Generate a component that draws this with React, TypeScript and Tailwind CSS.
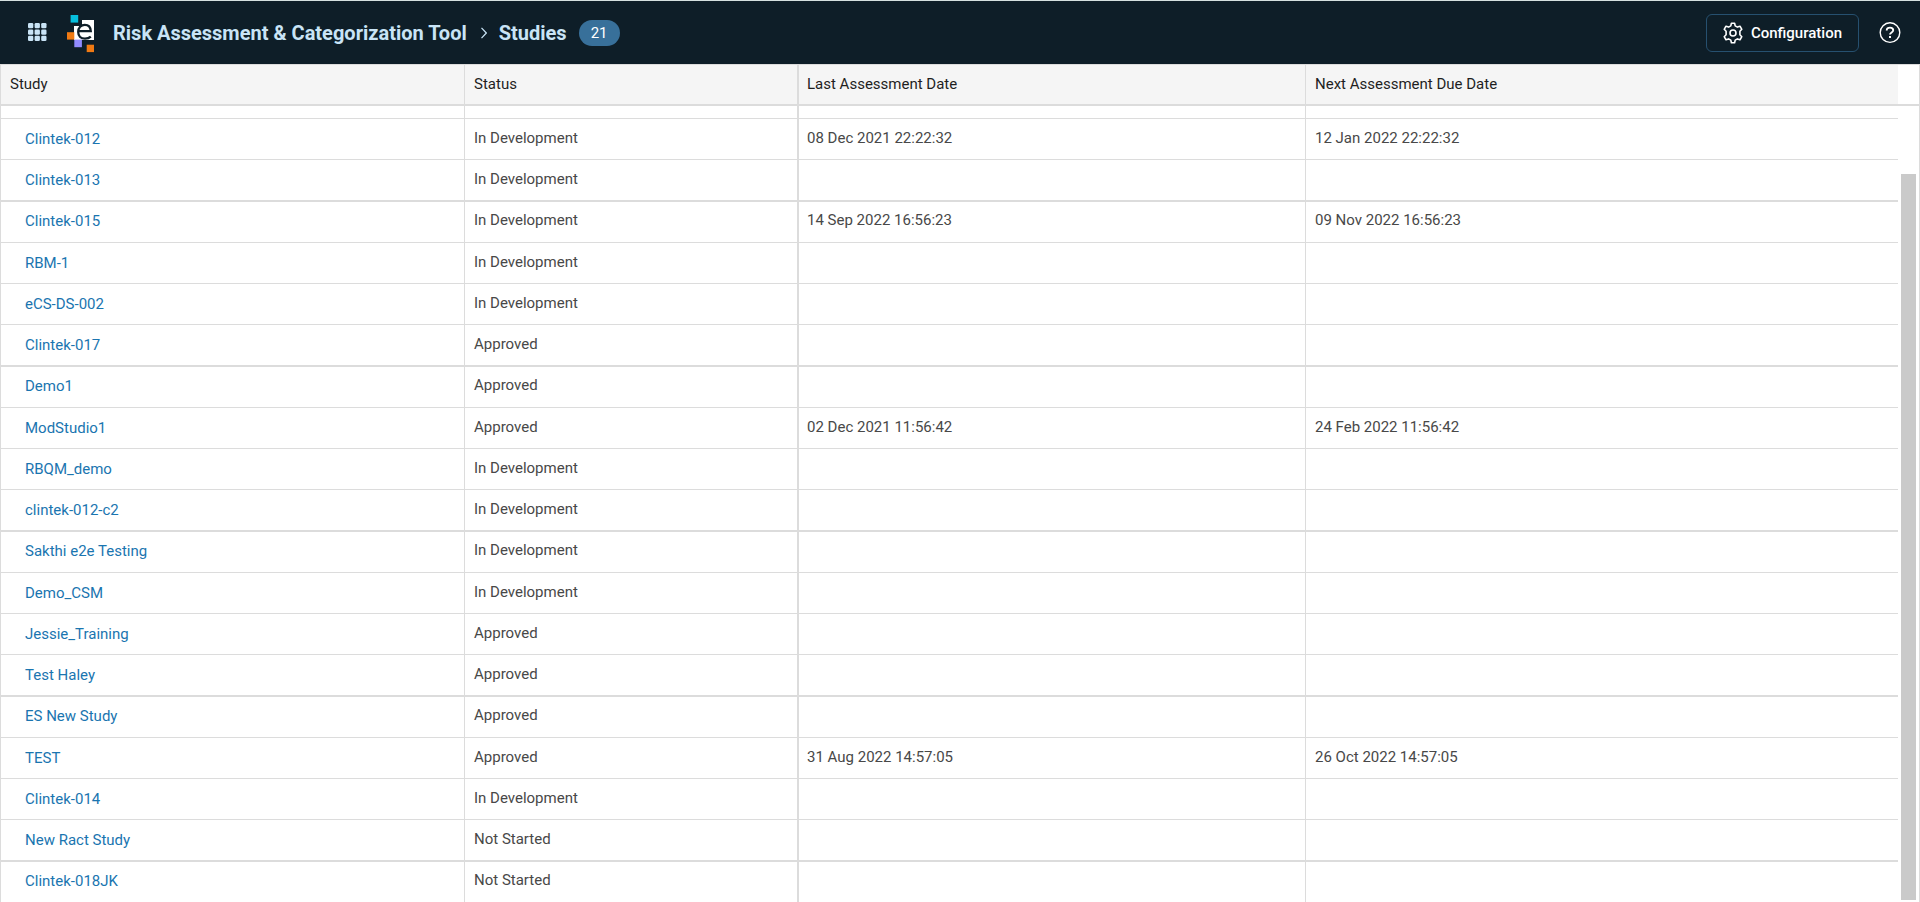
import { Fragment } from 'react';

type Study = { name: string; status: string; last?: string; next?: string };

const studies: Study[] = [
  { name: 'Clintek-012', status: 'In Development', last: '08 Dec 2021 22:22:32', next: '12 Jan 2022 22:22:32' },
  { name: 'Clintek-013', status: 'In Development' },
  { name: 'Clintek-015', status: 'In Development', last: '14 Sep 2022 16:56:23', next: '09 Nov 2022 16:56:23' },
  { name: 'RBM-1', status: 'In Development' },
  { name: 'eCS-DS-002', status: 'In Development' },
  { name: 'Clintek-017', status: 'Approved' },
  { name: 'Demo1', status: 'Approved' },
  { name: 'ModStudio1', status: 'Approved', last: '02 Dec 2021 11:56:42', next: '24 Feb 2022 11:56:42' },
  { name: 'RBQM_demo', status: 'In Development' },
  { name: 'clintek-012-c2', status: 'In Development' },
  { name: 'Sakthi e2e Testing', status: 'In Development' },
  { name: 'Demo_CSM', status: 'In Development' },
  { name: 'Jessie_Training', status: 'Approved' },
  { name: 'Test Haley', status: 'Approved' },
  { name: 'ES New Study', status: 'Approved' },
  { name: 'TEST', status: 'Approved', last: '31 Aug 2022 14:57:05', next: '26 Oct 2022 14:57:05' },
  { name: 'Clintek-014', status: 'In Development' },
  { name: 'New Ract Study', status: 'Not Started' },
  { name: 'Clintek-018JK', status: 'Not Started' },
];

function AppsIcon() {
  return (
    <svg width="19" height="19" viewBox="0 0 19 19" fill="#c9e4f6" aria-hidden="true">
      {[0, 6.4, 12.8].map((y) => (
        <Fragment key={y}>
          {[0, 6.6, 13.2].map((x) => (
            <rect key={x} x={x} y={y} width="5.3" height="5.3" rx="1.3" />
          ))}
        </Fragment>
      ))}
    </svg>
  );
}

function Logo() {
  return (
    <svg width="28" height="41" viewBox="0 -3 28 41" aria-hidden="true">
      <rect x="3.6" y="0" width="7.6" height="7.6" fill="#06bfdd" />
      <path d="M15 5h12v20H7V11h8z" fill="#fff" />
      <rect x="0" y="17.2" width="7.3" height="7.4" fill="#f07a13" />
      <rect x="7.3" y="24.6" width="7.6" height="7.6" fill="#918bff" />
      <rect x="19.7" y="29.7" width="7.3" height="7.4" fill="#f07a13" />
      <path d="M11.4 16.2H23.8C23.6 12 21.3 9.8 17.8 9.8C14 9.8 11.2 12.8 11.2 17C11.2 21.3 14 23.7 18 23.7C20.4 23.7 22.4 23 23.8 21.7" fill="none" stroke="#0e1e28" strokeWidth="2.3" />
    </svg>
  );
}

function GearIcon() {
  return (
    <svg width="20" height="22" viewBox="1 0 20 22" fill="none" stroke="#fff" strokeWidth="1.6" strokeLinejoin="round" aria-hidden="true">
      <path d="M9.4 1.2h3.2l.6 2.7 2.2 1.2 2.6-.9 1.8 3.1-1.9 1.9v3.6l1.9 1.9-1.8 3.1-2.6-.9-2.2 1.2-.6 2.7H9.4l-.6-2.7-2.2-1.2-2.6.9-1.8-3.1 1.9-1.9V9.2L2.2 7.3 4 4.2l2.6.9 2.2-1.2z" />
      <circle cx="11" cy="11" r="3" />
    </svg>
  );
}

function HelpIcon() {
  return (
    <svg width="22" height="22" viewBox="0 0 22 22" fill="none" stroke="#fff" aria-hidden="true">
      <circle cx="11" cy="10.6" r="9.8" strokeWidth="1.4" />
      <path d="M7.7 8.4C7.7 6.6 9 5.6 11 5.6s3.2 1 3.2 2.6c0 2.3-3.2 2.2-3.2 4.4" strokeWidth="1.9" />
      <rect x="10" y="14" width="2" height="2" fill="#fff" stroke="none" />
    </svg>
  );
}

const line = 'border-[#dcdcdc]';

export default function App() {
  return (
    <div className="flex h-screen flex-col overflow-hidden border-t border-[#d5e0e0] bg-white font-[Roboto,sans-serif] text-[15px] leading-5">
      <header className="flex h-[63px] shrink-0 items-center bg-[#0e1e28] pl-7 pr-[19px]">
        <button type="button" aria-label="Applications" className="mr-5">
          <AppsIcon />
        </button>
        <Logo />
        <nav aria-label="Breadcrumb" className="ml-[18px] flex items-center text-[20px] font-bold leading-6 text-[#c9e4f6]">
          <a href="#home">Risk Assessment &amp; Categorization Tool</a>
          <svg className="ml-[14px] mr-3" width="6" height="12" viewBox="0 0 6 12" fill="none" stroke="currentColor" strokeWidth="1.2" aria-hidden="true">
            <path d="M.5 .8 5.3 6 .5 11.2" />
          </svg>
          <h1>Studies</h1>
        </nav>
        <span className="ml-3 rounded-full bg-[#38709a] px-3 py-[3px] text-white">21</span>
        <button type="button" className="ml-auto flex h-[38px] items-center gap-2 rounded-md border border-[#26506f] px-4 font-medium text-white">
          <GearIcon />
          Configuration
        </button>
        <button type="button" aria-label="Help" className="ml-5">
          <HelpIcon />
        </button>
      </header>

      <main className={`flex min-h-0 flex-1 overflow-hidden border-x border-t ${line}`}>
        <div className="min-w-0 flex-1">
          <table className="w-full table-fixed border-separate border-spacing-0 text-left">
            <colgroup>
              <col className="w-[464px]" />
              <col className="w-[334px]" />
              <col className="w-[507px]" />
              <col />
            </colgroup>
            <thead className="bg-[#f5f5f5] text-[#1f1f1f]">
              <tr className="h-[41px]">
                <th className={`border-b-2 border-r px-[9px] pb-[2px] pt-0 font-normal ${line}`}>Study</th>
                <th className={`border-b-2 border-r-2 px-[9px] pb-[2px] pt-0 font-normal ${line}`}>Status</th>
                <th className={`border-b-2 border-r px-2 pb-[2px] pt-0 font-normal ${line}`}>Last Assessment Date</th>
                <th className={`border-b-2 px-[9px] pb-[2px] pt-0 font-normal ${line}`}>Next Assessment Due Date</th>
              </tr>
            </thead>
            <tbody className="text-[#484848]">
              <tr className="h-[13px]" aria-hidden="true">
                <td className={`border-b border-r p-0 ${line}`} />
                <td className={`border-b border-r-2 p-0 ${line}`} />
                <td className={`border-b border-r p-0 ${line}`} />
                <td className={`border-b p-0 ${line}`} />
              </tr>
              {studies.map((s, i) => {
                const opensGroup = i % 4 === 2;
                const cell = `border-b ${opensGroup ? 'border-t' : ''} ${line} pb-0 align-top`;
                const top = opensGroup ? 'pt-2' : 'pt-[9px]';
                return (
                  <tr key={s.name} className={opensGroup ? 'h-[42px]' : 'h-[41px]'}>
                    <td className={`${cell} border-r pl-6 pr-[9px] ${opensGroup ? 'pt-[9px]' : 'pt-[10px]'}`}>
                      <a href={`#${s.name}`} className="text-[#1a75b0]">{s.name}</a>
                    </td>
                    <td className={`${cell} border-r-2 px-[9px] ${top}`}>{s.status}</td>
                    <td className={`${cell} border-r px-2 ${top}`}>{s.last}</td>
                    <td className={`${cell} px-[9px] ${top}`}>{s.next}</td>
                  </tr>
                );
              })}
            </tbody>
          </table>
        </div>
        <div className="flex w-[21px] flex-col" aria-hidden="true">
          <div className={`h-[41px] shrink-0 border-b-2 ${line}`} />
          <div className="mx-[3px] mb-[2px] mt-[68px] flex-1 bg-[#cacaca]" />
        </div>
      </main>
    </div>
  );
}
